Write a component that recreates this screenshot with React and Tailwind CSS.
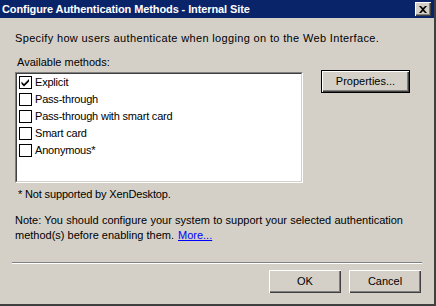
import React, { useState } from 'react';

const methods = [
  { id: 'explicit', label: 'Explicit', checked: true },
  { id: 'passthrough', label: 'Pass-through', checked: false },
  { id: 'smartpass', label: 'Pass-through with smart card', checked: false },
  { id: 'smartcard', label: 'Smart card', checked: false },
  { id: 'anon', label: 'Anonymous*', checked: false },
];

const CheckBox = ({ checked }) => (
  <span className="relative inline-block w-[13px] h-[13px] bg-white border border-black shrink-0">
    {checked && (
      <svg width="11" height="11" viewBox="0 0 11 11" className="absolute left-0 top-0">
        <path d="M1.5 4.5 L4 7 L9 2 L9 4.5 L4 9.5 L1.5 7 Z" fill="#000" />
      </svg>
    )}
  </span>
);

const Button = ({ children, isDefault, className = '' }) => (
  <button
    className={`h-[23px] bg-[#d4d0c8] text-[11px] text-black ${
      isDefault
        ? 'border border-black shadow-[inset_1px_1px_0_#fff,inset_-1px_-1px_0_#404040,inset_-2px_-2px_0_#808080]'
        : 'shadow-[inset_1px_1px_0_#fff,inset_-1px_-1px_0_#404040,inset_-2px_-2px_0_#808080]'
    } ${className}`}
  >
    {children}
  </button>
);

export default function App() {
  const [items, setItems] = useState(methods);

  const toggle = (id) =>
    setItems((prev) => prev.map((m) => (m.id === id ? { ...m, checked: !m.checked } : m)));

  return (
    <div
      className="w-[436px] h-[306px] bg-[#d4d0c8] flex flex-col border-r-2 border-b-2 border-r-[#404040] border-b-[#404040] overflow-hidden"
      style={{ fontFamily: '"Liberation Sans", Arial, sans-serif' }}
    >
      {/* title bar */}
      <div className="h-[18px] bg-[#0a246a] flex items-center justify-between pl-[2px] pr-[3px] shrink-0">
        <span className="text-white font-bold text-[11px] leading-none tracking-[-0.1px]">
          Configure Authentication Methods - Internal Site
        </span>
        <span className="w-[16px] h-[14px] bg-[#d4d0c8] flex items-center justify-center shadow-[inset_1px_1px_0_#fff,inset_-1px_-1px_0_#404040,inset_-2px_-2px_0_#808080]">
          <svg width="8" height="7" viewBox="0 0 8 7">
            <path d="M0 0 L2 0 L4 2 L6 0 L8 0 L5 3.5 L8 7 L6 7 L4 5 L2 7 L0 7 L3 3.5 Z" fill="#000" />
          </svg>
        </span>
      </div>

      <div className="flex-1 flex flex-col text-[11px] text-black px-[15px]">
        <p className="mt-[14px] leading-[13px] tracking-[0.35px]">
          Specify how users authenticate when logging on to the Web Interface.
        </p>

        <p className="mt-[11px] ml-[2px] leading-[13px]">Available methods:</p>

        <div className="flex mt-[3px]">
          <div className="w-[288px] h-[111px] bg-white border-t border-l border-t-[#808080] border-l-[#808080] border-r border-b border-r-white border-b-white">
            <div className="h-full border-t border-l border-t-[#404040] border-l-[#404040] border-r border-b border-r-[#d4d0c8] border-b-[#d4d0c8] pl-[2px]">
              {items.map((m) => (
                <div
                  key={m.id}
                  onClick={() => toggle(m.id)}
                  className="flex items-center gap-[3px] h-[17px] cursor-default tracking-[-0.2px]"
                >
                  <CheckBox checked={m.checked} />
                  <span className="leading-none">{m.label}</span>
                </div>
              ))}
            </div>
          </div>
          <Button isDefault className="w-[89px] ml-[18px] -mt-[2px]">
            Properties...
          </Button>
        </div>

        <p className="mt-[5px] ml-[3px] leading-[13px] tracking-[-0.15px]">* Not supported by XenDesktop.</p>

        <div className="mt-[12px] w-[388px] leading-[15px]">
          <p className="text-justify [text-align-last:justify]">
            Note: You should configure your system to support your selected authentication
          </p>
          <p className="flex gap-[4px]">
            <span>method(s) before enabling them.</span>
            <a href="#" className="text-[#0000ff] underline">
              More...
            </a>
          </p>
        </div>

        <div className="mt-[19px] -mx-[3px] h-[2px] border-t border-t-[#808080] border-b border-b-white" />

        <div className="flex justify-end gap-[8px] mt-[6px] -mr-[2px]">
          <Button className="w-[72px]">OK</Button>
          <Button className="w-[72px]">Cancel</Button>
        </div>
      </div>
    </div>
  );
}
